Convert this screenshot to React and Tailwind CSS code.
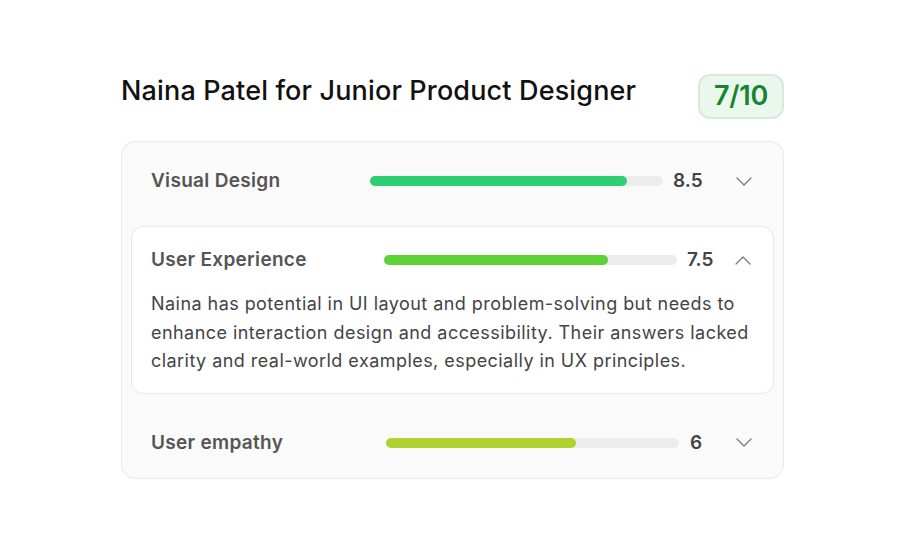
import React from "react";

function Chevron({ up }) {
  return (
    <svg width="16" height="9" viewBox="0 0 16 9" fill="none" className="shrink-0">
      <polyline
        points={up ? "1,8 8,1 15,8" : "1,1 8,8 15,1"}
        stroke="#7a7a7a"
        strokeWidth="1.3"
        strokeLinecap="round"
        strokeLinejoin="round"
      />
    </svg>
  );
}

function Bar({ pct, color }) {
  return (
    <div className="h-[10px] w-[293px] shrink-0 rounded-full bg-[#ececec]">
      <div className="h-full rounded-full" style={{ width: pct, background: color }} />
    </div>
  );
}

export default function App() {
  return (
    <div className="w-[904px] h-[552px] bg-white" style={{ fontFamily: "Inter, 'Noto Sans', sans-serif" }}>
      <div className="ml-[121px] w-[663px] pt-[74px]">
        <div className="flex items-start justify-between">
          <h1 className="mt-[0px] text-[27px] leading-[34px] font-medium text-[#111] tracking-[0.15px]">
            Naina Patel for Junior Product Designer
          </h1>
          <div className="flex h-[45px] w-[86px] items-center justify-center rounded-[12px] border-2 border-[#d5eadb] bg-[#eaf7ed] text-[27px] font-semibold text-[#15852f] tracking-[-0.3px]">
            7/10
          </div>
        </div>

        <div className="mt-[22px] rounded-[14px] border border-[#e9e9e9] bg-[#fafafa] px-[9px]">
          <div className="flex items-center pl-[20px] pt-[27px] pb-[33px]">
            <div className="w-[219px] shrink-0 text-[19px] leading-[24px] font-semibold text-[#555] tracking-[0.3px]">Visual Design</div>
            <Bar pct="87.7%" color="#2ecf72" />
            <div className="ml-[10px] text-[19px] leading-[24px] font-semibold text-[#444]">8.5</div>
            <div className="ml-auto mr-[22px]"><Chevron /></div>
          </div>

          <div className="rounded-[12px] border border-[#e8e8e8] bg-white px-[19px] pt-[21px] pb-[17px]">
            <div className="flex items-center">
              <div className="w-[233px] shrink-0 text-[19px] leading-[24px] font-semibold text-[#555] tracking-[0.3px]">User Experience</div>
              <Bar pct="76.4%" color="#5dd135" />
              <div className="ml-[10px] text-[19px] leading-[24px] font-semibold text-[#444]">7.5</div>
              <div className="ml-auto mr-[3px]"><Chevron up /></div>
            </div>
            <p className="mt-[18px] text-[18px] leading-[28.5px] text-[#444] tracking-[0.45px]">
              Naina has potential in UI layout and problem-solving but needs to enhance interaction design and accessibility. Their answers lacked clarity and real-world examples, especially in UX principles.
            </p>
          </div>

          <div className="flex items-center pl-[20px] pt-[37px] pb-[23px]">
            <div className="w-[235px] shrink-0 text-[19px] leading-[24px] font-semibold text-[#555] tracking-[0.3px]">User empathy</div>
            <Bar pct="64.8%" color="#b0d22e" />
            <div className="ml-[11px] text-[19px] leading-[24px] font-semibold text-[#444]">6</div>
            <div className="ml-auto mr-[22px]"><Chevron /></div>
          </div>
        </div>
      </div>
    </div>
  );
}
